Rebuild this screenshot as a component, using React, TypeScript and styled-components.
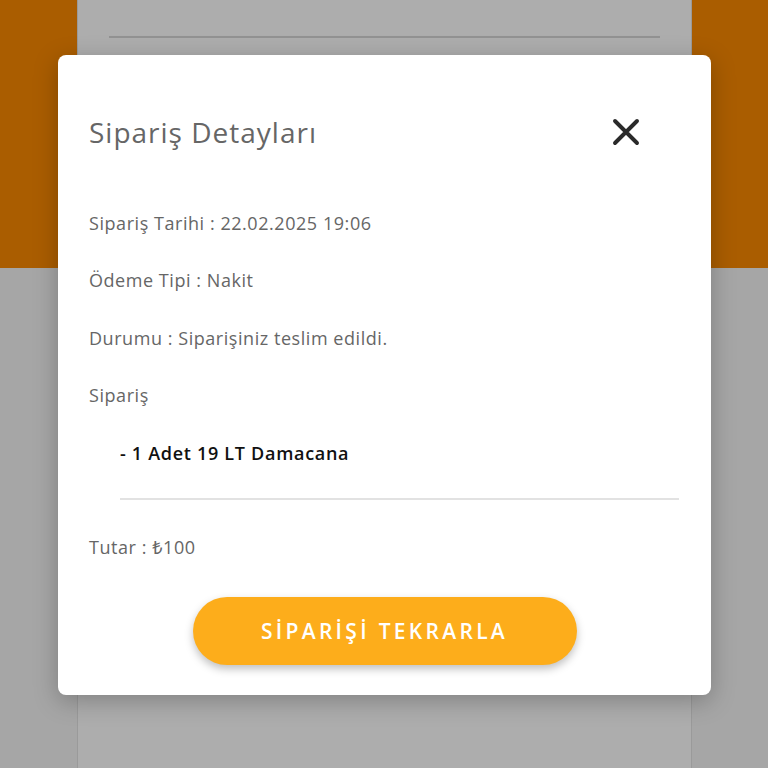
import React from "react";
import styled, { createGlobalStyle } from "styled-components";

const Global = createGlobalStyle`
  html, body { margin: 0; padding: 0; }
  body { font-family: "Open Sans", "Noto Sans", sans-serif; background: #f2f2f2; }
  #root { height: 768px; }
`;

const Page = styled.div`
  position: relative;
  height: 768px;
  overflow: hidden;
  background: linear-gradient(to bottom, #fb8a00 0, #fb8a00 268px, #f5f5f5 268px);
  display: flex;
  justify-content: center;
`;

const BackCard = styled.div`
  width: 615px;
  height: 100%;
  background: #ffffff;
  border-left: 1px solid #e4e4e4;
  border-right: 1px solid #e4e4e4;
  box-sizing: border-box;
  padding: 36px 31px 0;
`;

const BackLine = styled.div`
  height: 2px;
  background: #d8d8d8;
`;

const Overlay = styled.div`
  position: absolute;
  inset: 0;
  background: rgba(0, 0, 0, 0.32);
  display: flex;
  align-items: flex-start;
  justify-content: center;
  padding-top: 55px;
`;

const Modal = styled.div`
  width: 653px;
  height: 640px;
  box-sizing: border-box;
  background: #ffffff;
  border-radius: 8px;
  box-shadow: 0 6px 24px rgba(0, 0, 0, 0.25);
  padding: 56px 32px 0 31px;
  display: flex;
  flex-direction: column;
  margin-left: 1px;
`;

const Header = styled.div`
  display: flex;
  align-items: center;
  justify-content: space-between;
  height: 42px;
  padding-right: 38px;
`;

const Title = styled.h2`
  margin: 0;
  font-size: 28px;
  font-weight: 400;
  color: #666666;
  letter-spacing: 1px;
`;

const CloseButton = styled.button`
  border: none;
  background: none;
  padding: 0;
  width: 30px;
  height: 30px;
  display: flex;
  align-items: center;
  justify-content: center;
  cursor: pointer;
`;

const Info = styled.div`
  margin-top: 41px;
  display: flex;
  flex-direction: column;
`;

const Row = styled.div<{ $bold?: boolean; $indent?: boolean }>`
  height: 57.5px;
  display: flex;
  align-items: center;
  font-size: 18px;
  color: ${(p) => (p.$bold ? "#111111" : "#666666")};
  font-weight: ${(p) => (p.$bold ? 600 : 400)};
  padding-left: ${(p) => (p.$indent ? "31px" : "0")};
  letter-spacing: ${(p) => (p.$bold ? "0.7px" : "0.55px")};
`;

const Divider = styled.div`
  height: 2px;
  background: #e2e2e2;
  margin: 16px 0 19px 31px;
`;

const ButtonWrap = styled.div`
  display: flex;
  justify-content: center;
  margin-top: 22px;
`;

const RepeatButton = styled.button`
  width: 384px;
  height: 68px;
  border: none;
  border-radius: 34px;
  background: #fdad1b;
  color: #ffffff;
  font-family: inherit;
  font-size: 21px;
  font-weight: 600;
  letter-spacing: 3.3px;
  box-shadow: 0 4px 8px rgba(0, 0, 0, 0.25);
  cursor: pointer;
  margin-left: 1px;
`;

export default function App() {
  return (
    <>
      <Global />
      <Page>
        <BackCard>
          <BackLine />
        </BackCard>
        <Overlay>
          <Modal>
            <Header>
              <Title>Sipariş Detayları</Title>
              <CloseButton aria-label="Kapat">
                <svg width="28" height="28" viewBox="0 0 28 28">
                  <path d="M3 3 L25 25 M25 3 L3 25" stroke="#2a2a2a" strokeWidth="3.9" strokeLinecap="round" />
                </svg>
              </CloseButton>
            </Header>
            <Info>
              <Row>Sipariş Tarihi : 22.02.2025 19:06</Row>
              <Row>Ödeme Tipi : Nakit</Row>
              <Row>Durumu : Siparişiniz teslim edildi.</Row>
              <Row>Sipariş</Row>
              <Row $bold $indent>- 1 Adet 19 LT Damacana</Row>
            </Info>
            <Divider />
            <Row style={{ height: "56px" }}>Tutar : ₺100</Row>
            <ButtonWrap>
              <RepeatButton>SİPARİŞİ TEKRARLA</RepeatButton>
            </ButtonWrap>
          </Modal>
        </Overlay>
      </Page>
    </>
  );
}
